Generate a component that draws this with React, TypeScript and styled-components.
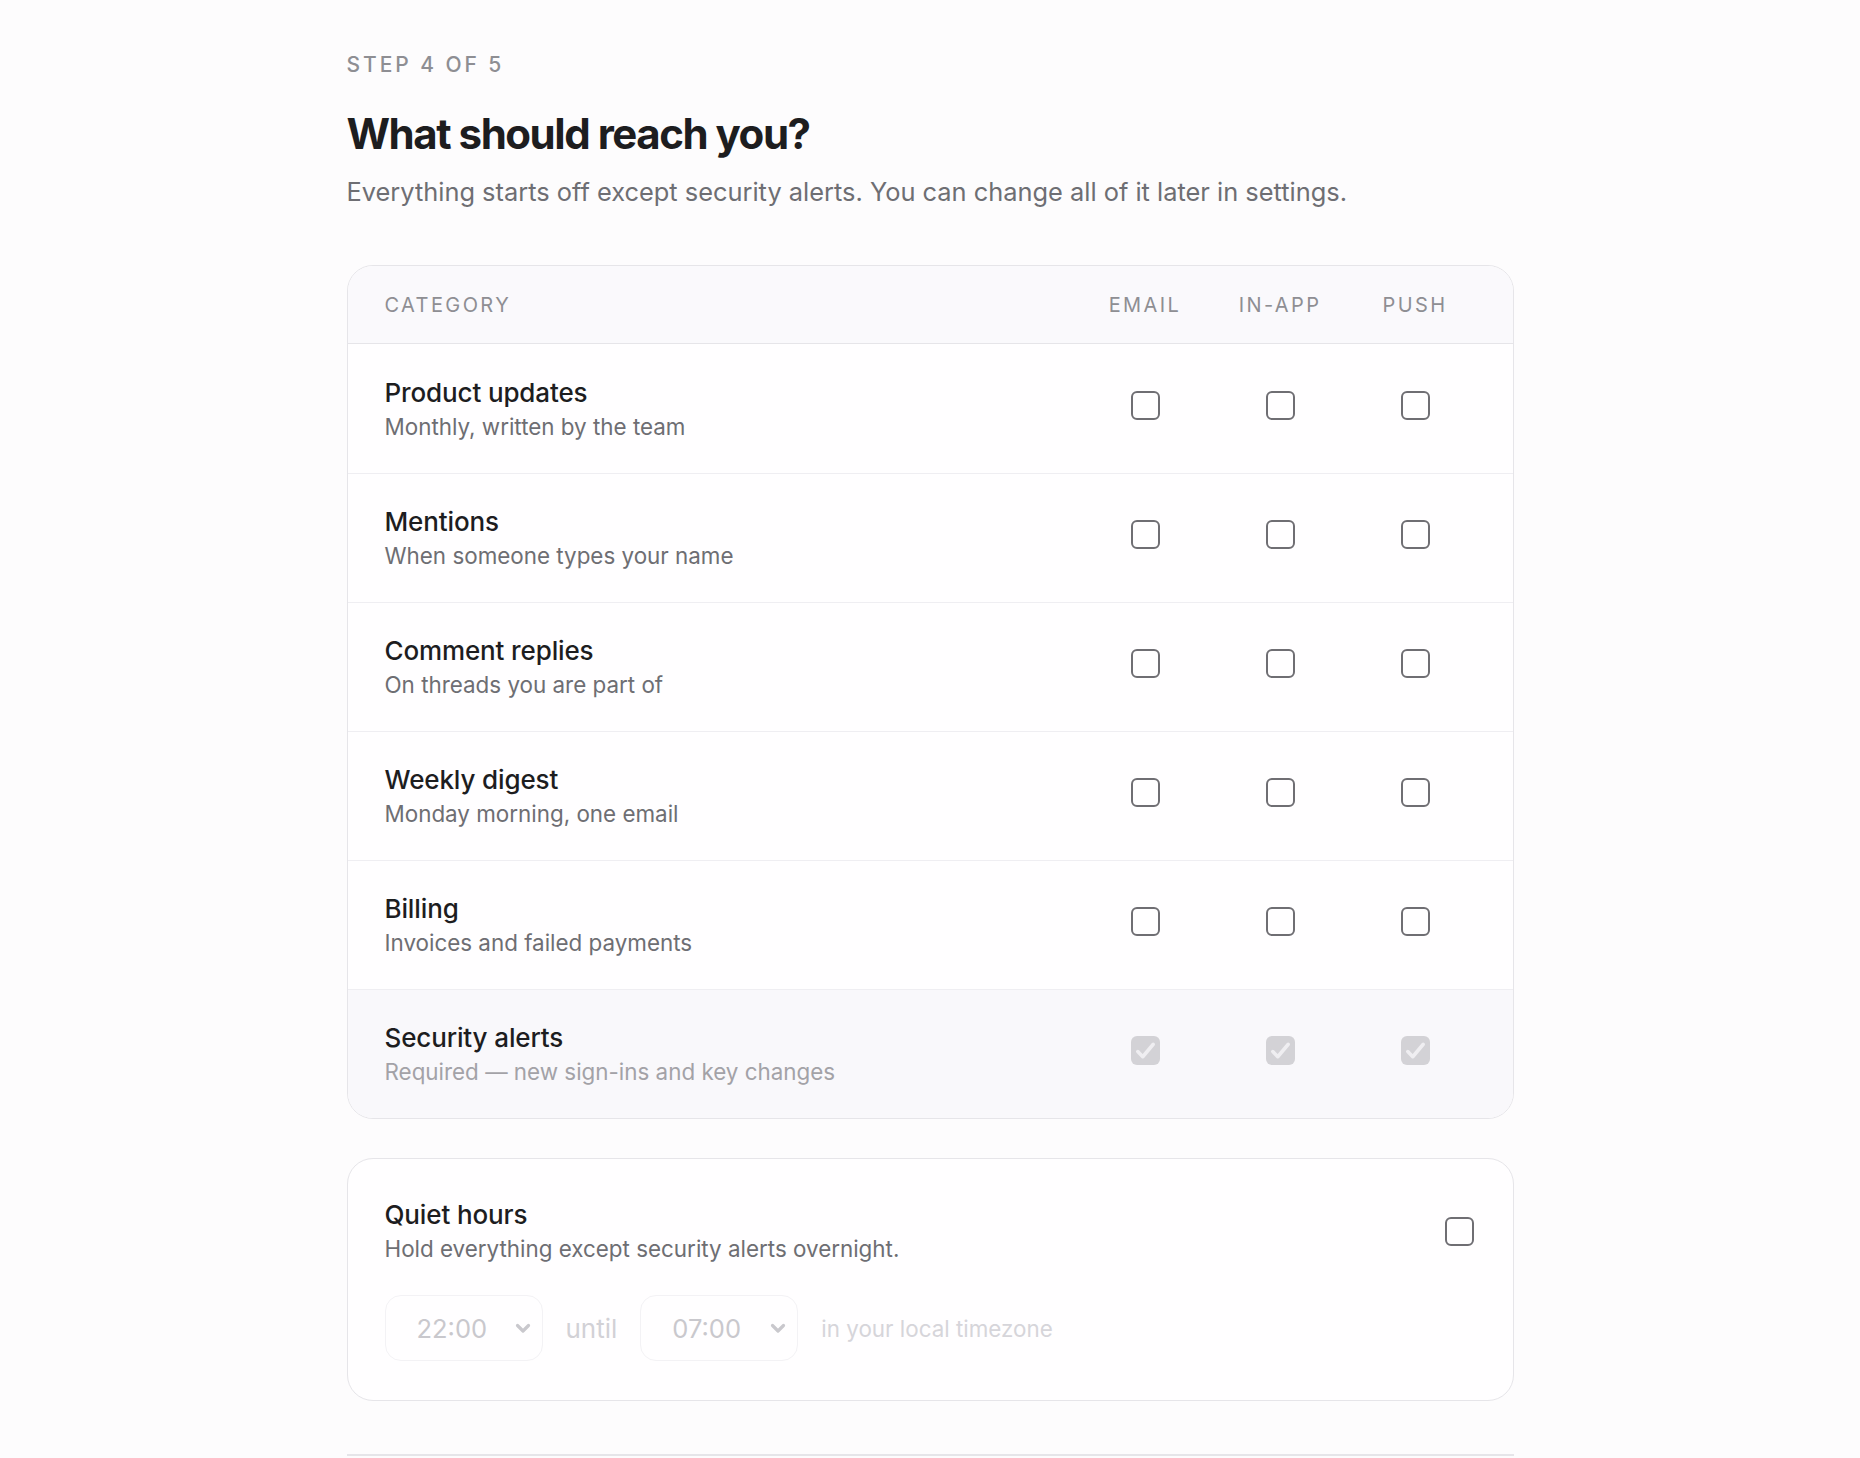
import { useState } from 'react';
import styled, { createGlobalStyle } from 'styled-components';

const GlobalStyle = createGlobalStyle`
  html, body {
    margin: 0;
    padding: 0;
    background: #fdfcfd;
  }
  body {
    font-family: Inter, 'Noto Sans', 'Liberation Sans', sans-serif;
    color: #1d1d1f;
    -webkit-font-smoothing: antialiased;
  }
  * {
    box-sizing: border-box;
  }
`;

const Page = styled.main`
  width: 1167px;
  margin: 0 auto;
  padding-top: 53px;
`;

const StepLabel = styled.div`
  font-size: 21px;
  line-height: 24px;
  font-weight: 500;
  letter-spacing: 0.14em;
  text-transform: uppercase;
  color: #8e8e93;
`;

const Title = styled.h1`
  margin: 31px 0 0;
  font-size: 42px;
  line-height: 52px;
  font-weight: 700;
  letter-spacing: -0.035em;
  color: #1d1d1f;
`;

const Lead = styled.p`
  margin: 17px 0 0;
  font-size: 25.4px;
  line-height: 30px;
  color: #6e6e73;
`;

const Card = styled.section<{ $top?: number }>`
  margin-top: ${(p) => p.$top ?? 0}px;
  border: 1px solid #e6e5e9;
  border-radius: 26px;
  background: #fffeff;
  overflow: hidden;
`;

const Grid = styled.div`
  display: grid;
  grid-template-columns: 1fr 135px 135px 135px;
  align-items: center;
  padding: 0 30px 0 37px;
`;

const HeadRow = styled(Grid)`
  height: 78px;
  background: #faf9fc;
  border-bottom: 1px solid #e6e5e9;
`;

const HeadCell = styled.div<{ $center?: boolean }>`
  font-size: 20px;
  font-weight: 400;
  letter-spacing: 0.12em;
  color: #8e8e93;
  text-align: ${(p) => (p.$center ? 'center' : 'left')};
`;

const Row = styled(Grid)<{ $muted?: boolean }>`
  height: 129px;
  background: ${(p) => (p.$muted ? '#f9f8fb' : 'transparent')};
  & + & {
    border-top: 1px solid #efeef2;
  }
`;

const Cell = styled.div`
  display: flex;
  justify-content: center;
  margin-bottom: 7px;
`;

const RowText = styled.div`
  display: flex;
  flex-direction: column;
  gap: 4px;
`;

const RowTitle = styled.div`
  font-size: 26px;
  line-height: 32px;
  font-weight: 500;
  letter-spacing: -0.005em;
  color: #1d1d1f;
`;

const RowHint = styled.div<{ $faded?: boolean }>`
  font-size: 22.4px;
  line-height: 28px;
  color: ${(p) => (p.$faded ? '#a3a2a7' : '#6e6e73')};
`;

const Box = styled.button<{ $checked: boolean; $locked?: boolean }>`
  width: 29px;
  height: 29px;
  padding: 0;
  border-radius: 6px;
  border: ${(p) => (p.$locked ? 'none' : '2px solid #6f6e73')};
  background: ${(p) => (p.$locked ? '#d3d2d6' : p.$checked ? '#1d1d1f' : '#fffeff')};
  display: flex;
  align-items: center;
  justify-content: center;
  cursor: ${(p) => (p.$locked ? 'default' : 'pointer')};
`;

const QuietBody = styled.div`
  padding: 40px 39px 39px 37px;
`;

const QuietHead = styled.div`
  display: flex;
  align-items: center;
  justify-content: space-between;
`;

const TimeRow = styled.div`
  display: flex;
  align-items: center;
  gap: 23px;
  margin-top: 32px;
`;

const Select = styled.div`
  width: 158px;
  height: 66px;
  border: 1px solid #f3f2f5;
  border-radius: 16px;
  background: #fffeff;
  display: flex;
  align-items: center;
  justify-content: space-between;
  padding: 0 9px 0 31px;
  font-size: 25.5px;
  color: #c9c8cd;
`;

const Until = styled.span`
  font-size: 26px;
  color: #d2d1d6;
`;

const Zone = styled.span`
  font-size: 22.4px;
  color: #d6d5da;
`;

const Footer = styled.div`
  margin-top: 53px;
  border-top: 2px solid #e6e5e9;
  height: 60px;
`;

type Channel = 'email' | 'inApp' | 'push';

const categories = [
  { key: 'product', title: 'Product updates', hint: 'Monthly, written by the team' },
  { key: 'mentions', title: 'Mentions', hint: 'When someone types your name' },
  { key: 'replies', title: 'Comment replies', hint: 'On threads you are part of' },
  { key: 'digest', title: 'Weekly digest', hint: 'Monday morning, one email' },
  { key: 'billing', title: 'Billing', hint: 'Invoices and failed payments' },
  { key: 'security', title: 'Security alerts', hint: 'Required — new sign-ins and key changes', locked: true }
];

const channels: Channel[] = ['email', 'inApp', 'push'];

const Check = ({ color, size }: { color: string; size: number }) => (
  <svg width={size} height={size} viewBox='0 0 20 20' fill='none'>
    <path d='M3.8 10.8l4 4.2 8.4-10' stroke={color} strokeWidth='2.8' strokeLinecap='round' strokeLinejoin='round' />
  </svg>
);

const Checkbox = ({ checked, locked, onChange }: { checked: boolean; locked?: boolean; onChange?: () => void }) => (
  <Box type='button' $checked={checked} $locked={locked} onClick={locked ? undefined : onChange} aria-pressed={checked}>
    {locked ? <Check color='#efeef1' size={25} /> : checked ? <Check color='#ffffff' size={19} /> : null}
  </Box>
);

const Chevron = () => (
  <svg width='20' height='20' viewBox='0 0 20 20' fill='none'>
    <path d='M4.5 7.5l5.5 5.5 5.5-5.5' stroke='#c9c8cd' strokeWidth='3.2' strokeLinecap='round' strokeLinejoin='round' />
  </svg>
);

const App = () => {
  const [prefs, setPrefs] = useState<Record<string, boolean>>({});
  const [quiet, setQuiet] = useState(false);

  const toggle = (id: string) => setPrefs((prev) => ({ ...prev, [id]: !prev[id] }));

  return (
    <>
      <GlobalStyle />
      <Page>
        <StepLabel>Step 4 of 5</StepLabel>
        <Title>What should reach you?</Title>
        <Lead>Everything starts off except security alerts. You can change all of it later in settings.</Lead>

        <Card $top={58}>
          <HeadRow>
            <HeadCell>CATEGORY</HeadCell>
            <HeadCell $center>EMAIL</HeadCell>
            <HeadCell $center>IN-APP</HeadCell>
            <HeadCell $center>PUSH</HeadCell>
          </HeadRow>
          {categories.map((c) => (
            <Row key={c.key} $muted={c.locked}>
              <RowText>
                <RowTitle>{c.title}</RowTitle>
                <RowHint $faded={c.locked}>{c.hint}</RowHint>
              </RowText>
              {channels.map((ch) => {
                const id = `${c.key}.${ch}`;
                return (
                  <Cell key={ch}>
                    <Checkbox checked={c.locked ? true : !!prefs[id]} locked={c.locked} onChange={() => toggle(id)} />
                  </Cell>
                );
              })}
            </Row>
          ))}
        </Card>

        <Card $top={39}>
          <QuietBody>
            <QuietHead>
              <RowText>
                <RowTitle>Quiet hours</RowTitle>
                <RowHint>Hold everything except security alerts overnight.</RowHint>
              </RowText>
              <Checkbox checked={quiet} onChange={() => setQuiet(!quiet)} />
            </QuietHead>
            <TimeRow>
              <Select>
                22:00
                <Chevron />
              </Select>
              <Until>until</Until>
              <Select>
                07:00
                <Chevron />
              </Select>
              <Zone>in your local timezone</Zone>
            </TimeRow>
          </QuietBody>
        </Card>

        <Footer />
      </Page>
    </>
  );
};

export default App;
